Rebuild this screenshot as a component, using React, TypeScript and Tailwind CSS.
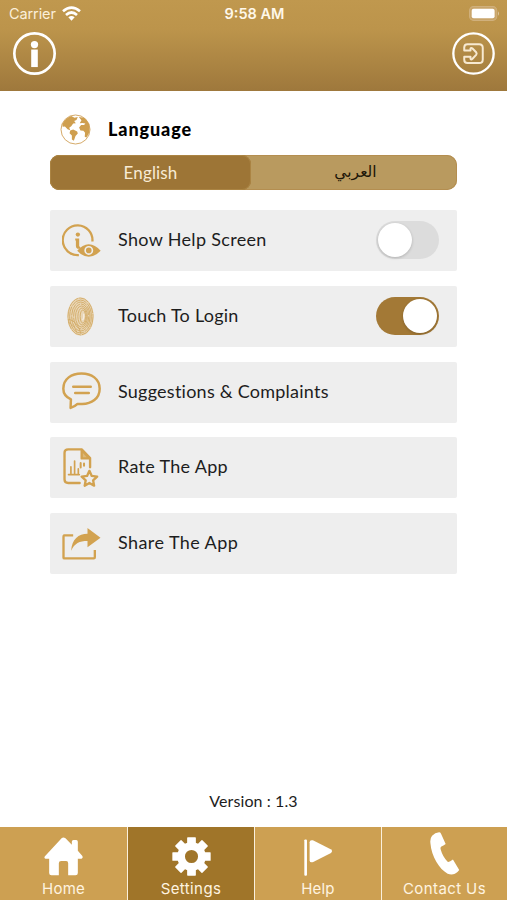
import React, { useState } from "react";

type IconProps = { className?: string };

const WifiIcon = ({ className }: IconProps) => (
  <svg viewBox="0 0 57 45" className={className} fill="none" stroke="white" strokeWidth="8">
    <path d="M3 16 Q28.500 -6 54 16" />
    <path d="M12 27 Q28.500 12 45 27" />
    <path d="M19 34 Q28.500 26 38 34 L28.500 44Z" fill="white" stroke="none" />
  </svg>
);

const BatteryIcon = ({ className }: IconProps) => (
  <svg viewBox="0 0 92 44" className={className}>
    <rect x="1.500" y="1.500" width="81" height="41" rx="12" fill="#c9a56b" stroke="#d0b07c" strokeWidth="3" />
    <rect x="8" y="8" width="68" height="28" rx="6" fill="white" />
    <path d="M86 15 Q92 22 86 29Z" fill="#dec6a0" />
  </svg>
);

const InfoIcon = ({ className }: IconProps) => (
  <svg viewBox="0 0 130 130" className={className} fill="white">
    <circle cx="65" cy="65" r="61" fill="none" stroke="white" strokeWidth="8" />
    <circle cx="65" cy="38" r="11" />
    <path d="M55 53H75V106H55Z" />
  </svg>
);

const LoginIcon = ({ className }: IconProps) => (
  <svg viewBox="0 0 130 130" className={className} fill="none" stroke="white" strokeLinejoin="round">
    <circle cx="65" cy="65" r="61" strokeWidth="7" />
    <path
      d="M37 56V47Q37 37 47 37H82Q93 37 93 48V83Q93 94 82 94H47Q37 94 37 84V75H56V81Q58 85 62 81L73 69Q76 65 73 61L62 50Q58 46 56 50V56Z"
      stroke="#f7e9d1"
      strokeWidth="6"
    />
  </svg>
);

const GlobeIcon = ({ className }: IconProps) => (
  <svg viewBox="0 0 94 92" className={className} fill="#cf9f4f">
    <circle cx="47" cy="46" r="44" fill="white" stroke="#d5a967" strokeWidth="3" />
    <path d="M7 29 Q17 11 34 5 L44 10 L54 8 L50 17 L43 20 L48 27 L40 28 L34 36 L28 41 L31 48 L23 45 L15 37 L8 38Z" />
    <path d="M31 49 L40 46 L52 52 L54 58 L47 66 L42 80 L36 76 L36 64 L29 57Z" />
    <path d="M57 8 L73 10 Q83 17 88 29 L90 46 L87 60 L80 70 L75 68 L76 56 L71 50 L62 49 L58 40 L64 32 L73 32 L77 28 L68 26 L60 27 L65 18Z" />
  </svg>
);

const HelpScreenIcon = ({ className }: IconProps) => (
  <svg viewBox="0 0 118 98" className={className} fill="none" stroke="#d2a250">
    <path d="M51 93 A45 45 0 1 1 92 52" strokeWidth="7" />
    <circle cx="48" cy="31" r="6.500" fill="#d2a250" stroke="none" />
    <path d="M40 43H52V66L58 74H47Q42 72 42 66V49H40Z" fill="#d2a250" stroke="none" />
    <path d="M46 80 Q62 60 81 60 Q100 60 117 80 Q100 98 81 98 Q62 98 46 80Z" fill="#d2a250" stroke="none" />
    <circle cx="81" cy="79" r="11" fill="#d2a250" stroke="#eee" strokeWidth="5" />
  </svg>
);

const FingerprintIcon = ({ className }: IconProps) => (
  <svg viewBox="0 0 82 118" className={className} fill="none" stroke="#d3ab67" strokeWidth="2.800">
    <ellipse cx="41" cy="59" rx="40" ry="58" fill="#e9d6b6" stroke="none" />
    <ellipse cx="41" cy="59" rx="38" ry="56" strokeDasharray="34 2" />
    <ellipse cx="41" cy="59" rx="33" ry="50" strokeDasharray="52 3" />
    <ellipse cx="42" cy="59" rx="28" ry="44" strokeDasharray="36 3" />
    <ellipse cx="43" cy="59" rx="23" ry="38" strokeDasharray="45 3" />
    <ellipse cx="44" cy="59" rx="18" ry="32" />
    <ellipse cx="46" cy="59" rx="13" ry="26" />
    <ellipse cx="48" cy="59" rx="8" ry="20" />
    <path d="M4 77Q22 83 30 108M4 67Q33 73 42 111" />
    <path d="M51 51V60Q51 66 47 70" stroke="#f4ecdf" strokeWidth="4" />
  </svg>
);

const ChatIcon = ({ className }: IconProps) => (
  <svg viewBox="0 0 118 114" className={className} fill="none" stroke="#d2a250" strokeWidth="7.500" strokeLinecap="round" strokeLinejoin="round">
    <path d="M27 82 Q4 72 4 50 C4 20 29 4 59 4 S114 20 114 50 S89 96 61 96 H47 Q39 104 26 108Z" />
    <path d="M34 44H87M40 63H81" />
  </svg>
);

const RateIcon = ({ className }: IconProps) => (
  <svg viewBox="0 0 106 116" className={className} fill="none" stroke="#d2a250" strokeWidth="7" strokeLinejoin="round" strokeLinecap="round">
    <path d="M49 104H15Q4 104 4 94V14Q4 4 15 4H55L80 30V57" />
    <path d="M55 6V31H78Z" fill="#dcb878" />
    <path d="M16 79H48M23 75V56M34 75V39M45 75V62" strokeWidth="5" />
    <path d="M52 45V58M62 46V53" strokeWidth="6" />
    <path d="M78 68 L85 83 L101 85 L89 96 L92 112 L78 104 L64 112 L67 96 L55 85 L71 83Z" strokeWidth="7" />
  </svg>
);

const ShareIcon = ({ className }: IconProps) => (
  <svg viewBox="0 0 116 96" className={className} fill="#d2a250">
    <path d="M33 22H5Q4 22 4 26V89Q4 91 7 91H95Q98 91 98 88V66" fill="none" stroke="#d2a250" strokeWidth="7" />
    <path d="M27 68 C29 33 49 17 76 17 V0 L115 29 L76 58 V39 C52 39 37 46 27 68Z" />
  </svg>
);

const HomeIcon = ({ className }: IconProps) => (
  <svg viewBox="0 0 116 117" className={className} fill="white">
    <path d="M53 3 Q58 -1 64 4 L83 23 V14 Q83 9 88 9 H96 Q101 9 101 14 V41 L114 56 Q118 63 112 65 H101 V108 Q101 115 94 115 H72 V79 Q72 72 66 72 H51 Q44 72 44 79 V115 H22 Q15 115 15 108 V65 H4 Q-2 63 3 57Z" />
  </svg>
);

const TEETH = [0, 45, 90, 135, 180, 225, 270, 315];

const GearIcon = ({ className }: IconProps) => (
  <svg viewBox="0 0 116 116" className={className} fill="white">
    {TEETH.map((a) => (
      <rect key={a} x="45" y="1" width="26" height="30" rx="2" transform={`rotate(${a} 58 58)`} />
    ))}
    <circle cx="58" cy="58" r="31" fill="none" stroke="white" strokeWidth="23" />
  </svg>
);

const FlagIcon = ({ className }: IconProps) => (
  <svg viewBox="0 0 88 112" className={className} fill="white">
    <rect x="1" y="1" width="8" height="110" rx="3" />
    <path d="M17 10 Q17 2 27 4 L81 31 Q89 36 82 42 L28 70 Q17 73 17 64Z" />
  </svg>
);

const PhoneIcon = ({ className }: IconProps) => (
  <svg viewBox="0 0 90 130" className={className} fill="white">
    <path d="M6 11 Q15 2 27 1 Q31 1 33 5 L47 36 Q40 41 34 44 Q30 47 32 53 Q38 75 53 90 Q58 92 69 83 L88 115 Q84 121 75 126 Q65 131 53 126 C28 113 4 74 1 35 Q-1 19 6 11Z" />
  </svg>
);

function Toggle({ on, onClick, label }: { on: boolean; onClick: () => void; label: string }) {
  return (
    <button
      type="button"
      role="switch"
      aria-checked={on}
      aria-label={label}
      onClick={onClick}
      className={[
        "mb-px flex h-[38px] w-[63px] items-center rounded-full px-[2px]",
        on ? "justify-end bg-[#a37936]" : "justify-start bg-[#dcdcdc]",
      ].join(" ")}
    >
      <span className="h-[34px] w-[34px] rounded-full bg-white shadow-[0_1px_3px_rgba(0,0,0,0.2)]" />
    </button>
  );
}

function Row({
  icon,
  label,
  textClass,
  children,
}: {
  icon: React.ReactNode;
  label: string;
  textClass: string;
  children?: React.ReactNode;
}) {
  return (
    <div className="flex h-[61px] items-center rounded-[2px] bg-[#eeeeee] pr-[18px]">
      <div className="flex w-[68px] shrink-0 pl-[12px]">{icon}</div>
      <span className={`flex-1 whitespace-nowrap pb-[3px] text-[18px] leading-6 text-[#1d1d1d] ${textClass}`}>{label}</span>
      {children}
    </div>
  );
}

const tabs = [
  { label: "Home", textClass: "tracking-[0.25px]", icon: <HomeIcon className="h-[39px] w-[39px]" /> },
  { label: "Settings", textClass: "tracking-[0.4px]", icon: <GearIcon className="h-[39px] w-[39px]" /> },
  { label: "Help", textClass: "tracking-[0.2px]", icon: <FlagIcon className="h-[37px] w-[29px]" /> },
  { label: "Contact Us", textClass: "tracking-[0.4px]", icon: <PhoneIcon className="mb-px h-[43px] w-[30px]" /> },
];

export default function App() {
  const [helpScreen, setHelpScreen] = useState(false);
  const [touchLogin, setTouchLogin] = useState(true);
  const [lang, setLang] = useState("en");
  const [tab, setTab] = useState("Settings");

  return (
    <div className="flex h-[900px] w-[507px] flex-col overflow-hidden bg-white font-['Lato',sans-serif]">
      <header className="h-[91px] shrink-0 bg-[linear-gradient(to_bottom,#c0984e_0%,#bc944b_33%,#9e783c_100%)]">
        <div className="grid h-[27px] grid-cols-3 items-center pl-[9px] pr-[7px] font-['Inter',sans-serif] text-white">
          <div className="flex items-center gap-[6px]">
            <span className="text-[14.500px] leading-5 tracking-[-0.1px] text-[#fbefd9]">Carrier</span>
            <WifiIcon className="h-[15px] w-[19px]" />
          </div>
          <span className="whitespace-nowrap text-center text-[14.500px] font-semibold leading-5 text-[#fff8ea]">9:58 AM</span>
          <BatteryIcon className="h-[15px] w-[31px] justify-self-end" />
        </div>
        <div className="flex justify-between pl-[13px] pr-[12px] pt-[5px]">
          <button type="button" aria-label="Info">
            <InfoIcon className="h-[43px] w-[43px]" />
          </button>
          <button type="button" aria-label="Login">
            <LoginIcon className="h-[43px] w-[43px]" />
          </button>
        </div>
      </header>

      <main className="flex flex-1 flex-col px-[50px]">
        <div className="mt-[22px] flex h-[32px] items-center pl-[10px]">
          <GlobeIcon className="h-[31px] w-[31px]" />
          <h1 className="pl-[17px] text-[18px] font-black leading-6 tracking-[0.9px] text-black">Language</h1>
        </div>

        <div className="mt-[10px] flex h-[35px] rounded-[10px] bg-[#b99a5f] ring-1 ring-inset ring-[#b48e50]">
          <button
            type="button"
            onClick={() => setLang("en")}
            className={[
              "w-[201px] rounded-[9px] text-[17px] tracking-[0.15px]",
              lang === "en" ? "bg-[#9d7536] text-[#f8ebd5] ring-1 ring-inset ring-[#ab8443]" : "text-[#1d1608]",
            ].join(" ")}
          >
            English
          </button>
          <button
            type="button"
            onClick={() => setLang("ar")}
            className={[
              "flex-1 rounded-[9px] pl-[3px] font-['DejaVu_Sans',sans-serif] text-[15.500px]",
              lang === "ar" ? "bg-[#9d7536] text-[#f8ebd5]" : "text-[#1d1608]",
            ].join(" ")}
          >
            العربي
          </button>
        </div>

        <div className="mt-[20px] flex flex-col gap-[14.750px]">
          <Row icon={<HelpScreenIcon className="h-[33px] w-[39px]" />} label="Show Help Screen" textClass="tracking-[0.32px]">
            <Toggle on={helpScreen} onClick={() => setHelpScreen(!helpScreen)} label="Show Help Screen" />
          </Row>
          <Row icon={<FingerprintIcon className="ml-[5px] h-[39px] w-[27px]" />} label="Touch To Login" textClass="tracking-[0.25px]">
            <Toggle on={touchLogin} onClick={() => setTouchLogin(!touchLogin)} label="Touch To Login" />
          </Row>
          <Row icon={<ChatIcon className="mb-[2px] h-[38px] w-[39px]" />} label="Suggestions & Complaints" textClass="tracking-[0.24px]" />
          <Row icon={<RateIcon className="ml-[1px] h-[39px] w-[36px]" />} label="Rate The App" textClass="tracking-[0.3px]" />
          <Row icon={<ShareIcon className="h-[32px] w-[39px]" />} label="Share The App" textClass="tracking-[0.42px]" />
        </div>

        <p className="mb-[14px] mt-auto text-center text-[16px] leading-6 tracking-[0.1px] text-[#1d1d1d]">Version : 1.3</p>
      </main>

      <nav className="grid h-[73px] shrink-0 grid-cols-[127px_126px_126px_1fr] gap-px bg-[#fbf0dc] font-['Inter',sans-serif]">
        {tabs.map((t) => (
          <button
            key={t.label}
            type="button"
            onClick={() => setTab(t.label)}
            className={[
              "flex flex-col items-center justify-end pb-px text-white",
              t.label === tab ? "bg-[#a07529]" : "bg-[#cda052]",
            ].join(" ")}
          >
            {t.icon}
            <span className={`mt-[3px] whitespace-nowrap text-[15px] leading-5 text-[#fff4e0] ${t.textClass}`}>{t.label}</span>
          </button>
        ))}
      </nav>
    </div>
  );
}
